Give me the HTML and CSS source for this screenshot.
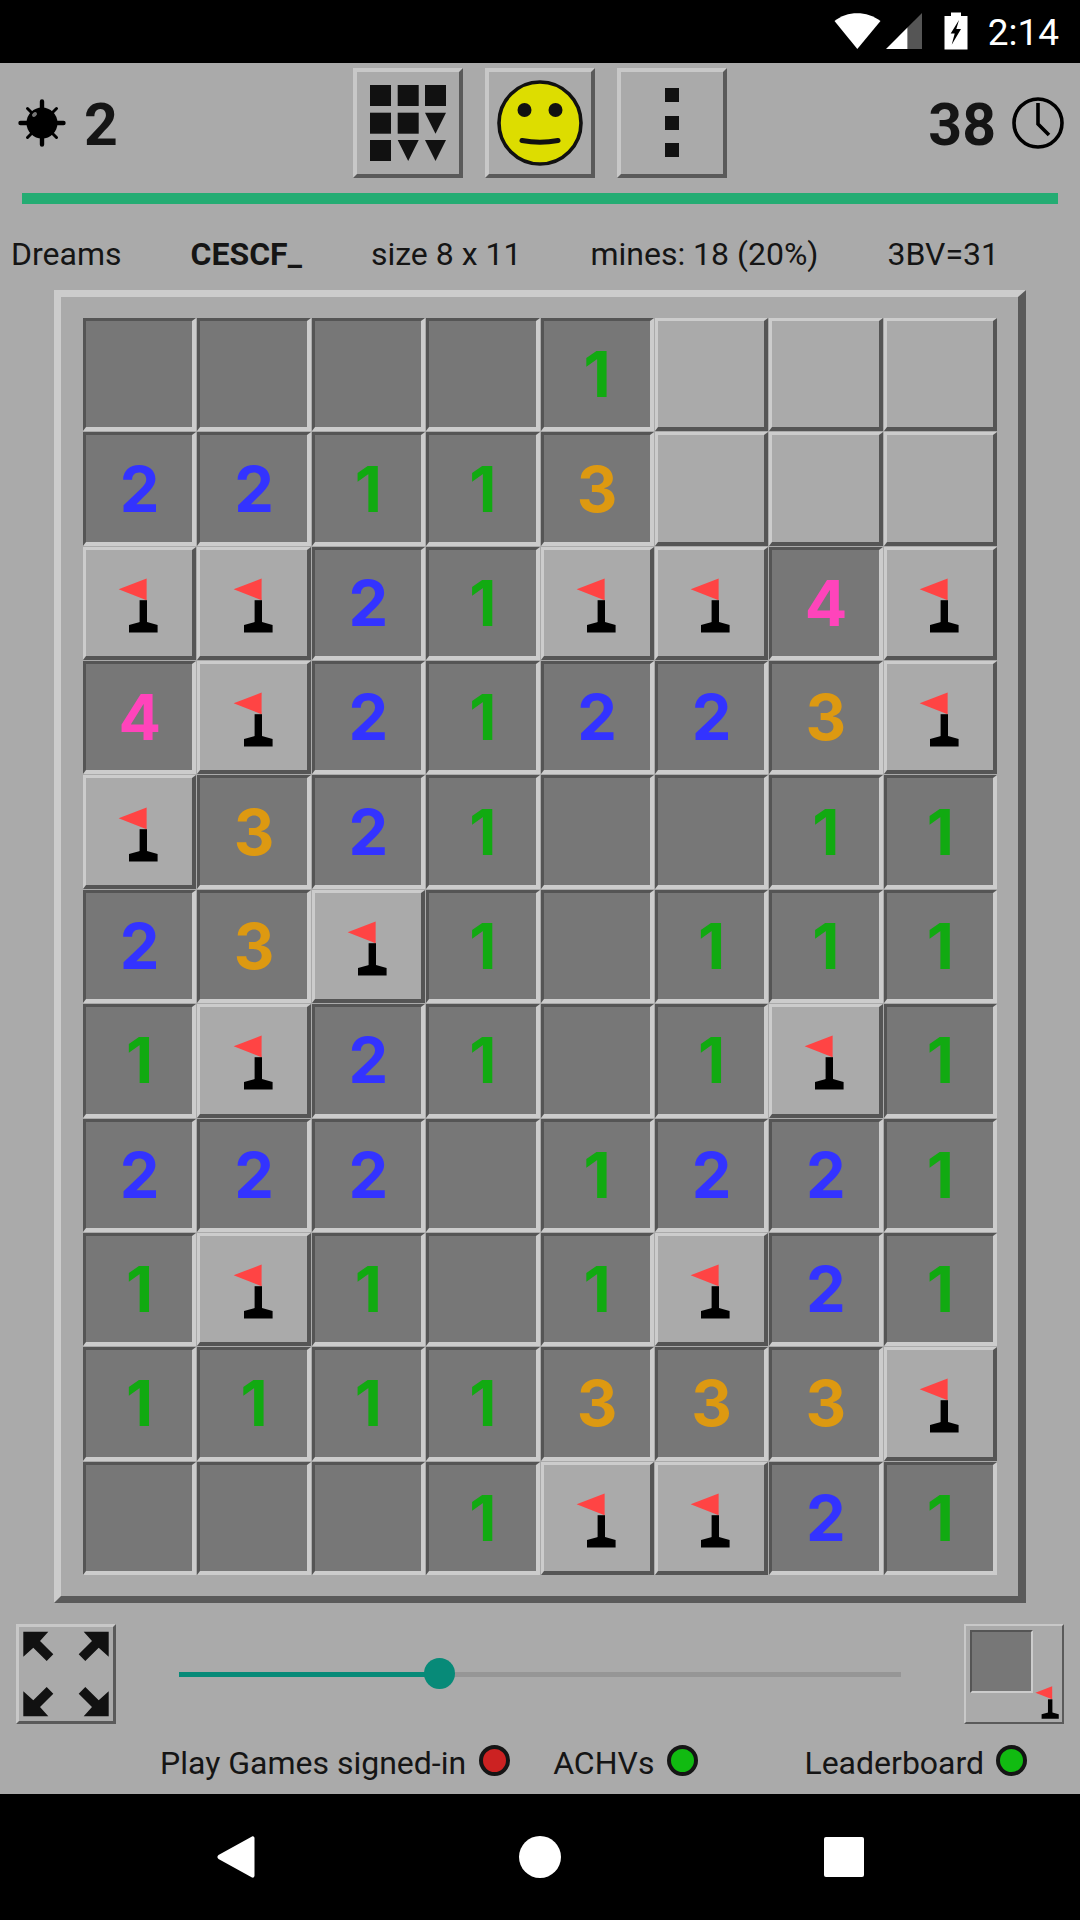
FILE: index.html
```html
<!DOCTYPE html>
<html lang="en">
<head>
  <meta charset="UTF-8" />
  <title>Minesweeper</title>
  <link rel="stylesheet" href="styles.css">
</head>
<body>
  <svg class="defs" width="0" height="0">
    <symbol id="flag" viewBox="0 0 114 114">
      <polygon points="35.6,42.2 63.6,31.5 63.6,53.2" fill="#ff4444" />
      <rect x="56.6" y="53.2" width="7.4" height="23" fill="#000" />
      <path d="M46 85.5V78L57 75H64L74.6 78V85.5Z" fill="#000" />
    </symbol>
  </svg>

  <div class="status-bar">
    <svg class="wifi" width="47" height="36" viewBox="0 0 47 36"><path d="M0.5 8C13-2.5 33-2.5 46.5 8L23.3 36Z" fill="#fff" /></svg>
    <svg class="signal" width="36" height="36" viewBox="0 0 36 36">
      <polygon points="0,36 21.7,14.3 21.7,36" fill="#fff" />
      <polygon points="21.7,14.3 36,0 36,36 21.7,36" fill="#555" />
    </svg>
    <svg class="battery" width="24" height="38" viewBox="0 0 24 38">
      <path d="M7 0.5H17V4H23.5V37.5H0.5V4H7Z" fill="#fff" />
      <polygon points="15,8 6.7,21.5 10.7,21.5 7.7,32.8 17,17 12.3,17" fill="#000" />
    </svg>
    <span class="clock-text">2:14</span>
  </div>

  <div class="top-bar">
    <div class="counter">
      <svg width="48" height="48" viewBox="-24 -24 48 48">
        <g stroke="#000" stroke-linecap="round">
          <path d="M0-21.5V21.5M-21.5 0H21.5" stroke-width="4.4" />
          <path d="M-14.5-14.5L14.5 14.5M-14.5 14.5L14.5-14.5" stroke-width="3" />
        </g>
        <circle r="15.5" fill="#000" />
        <ellipse cx="-7.5" cy="-8.5" rx="2.8" ry="2" fill="#777" transform="rotate(-40 -7.5 -8.5)" />
      </svg>
      <span class="big-num">2</span>
    </div>

    <div class="tools">
      <div class="btn">
        <svg width="110" height="110" viewBox="0 0 110 110" fill="#111">
          <rect x="17" y="17" width="21" height="21" /><rect x="44.7" y="17" width="21" height="21" /><rect x="72" y="17" width="21" height="21" />
          <rect x="17" y="44.7" width="21" height="21" /><rect x="44.7" y="44.7" width="21" height="21" /><polygon points="72,44.7 93,44.7 82.5,65.7" />
          <rect x="17" y="72" width="21" height="21" /><polygon points="44.7,72 65.7,72 55.2,93" /><polygon points="72,72 93,72 82.5,93" />
        </svg>
      </div>
      <div class="btn">
        <svg width="110" height="110" viewBox="-55 -55 110 110">
          <circle r="41" fill="#dddd00" stroke="#111" stroke-width="3.6" />
          <circle cx="-15.5" cy="-13" r="7" fill="#111" />
          <circle cx="15.5" cy="-13" r="7" fill="#111" />
          <path d="M-18 17.5Q0 21 18 17.5" fill="none" stroke="#111" stroke-width="5" stroke-linecap="round" />
        </svg>
      </div>
      <div class="btn">
        <svg width="110" height="110" viewBox="0 0 110 110" fill="#111">
          <rect x="48" y="20" width="14" height="14" />
          <rect x="48" y="48" width="14" height="14" />
          <rect x="48" y="75" width="14" height="14" />
        </svg>
      </div>
    </div>

    <div class="counter timer">
      <span class="big-num">38</span>
      <svg width="52" height="52" viewBox="-26 -26 52 52">
        <circle r="24" fill="none" stroke="#000" stroke-width="3.6" />
        <path d="M0-20V1L11 12" fill="none" stroke="#000" stroke-width="3.6" />
      </svg>
    </div>
  </div>

  <div class="progress"></div>

  <div class="info-row">
    <span>Dreams</span>
    <b>CESCF_</b>
    <span>size 8 x 11</span>
    <span>mines: 18 (20%)</span>
    <span>3BV=31</span>
  </div>

  <div class="frame">
    <div class="board">
      <div class="cell open"></div>
      <div class="cell open"></div>
      <div class="cell open"></div>
      <div class="cell open"></div>
      <div class="cell open n1">1</div>
      <div class="cell"></div>
      <div class="cell"></div>
      <div class="cell"></div>

      <div class="cell open n2">2</div>
      <div class="cell open n2">2</div>
      <div class="cell open n1">1</div>
      <div class="cell open n1">1</div>
      <div class="cell open n3">3</div>
      <div class="cell"></div>
      <div class="cell"></div>
      <div class="cell"></div>

      <div class="cell"><svg class="flag"><use href="#flag" /></svg></div>
      <div class="cell"><svg class="flag"><use href="#flag" /></svg></div>
      <div class="cell open n2">2</div>
      <div class="cell open n1">1</div>
      <div class="cell"><svg class="flag"><use href="#flag" /></svg></div>
      <div class="cell"><svg class="flag"><use href="#flag" /></svg></div>
      <div class="cell open n4">4</div>
      <div class="cell"><svg class="flag"><use href="#flag" /></svg></div>

      <div class="cell open n4">4</div>
      <div class="cell"><svg class="flag"><use href="#flag" /></svg></div>
      <div class="cell open n2">2</div>
      <div class="cell open n1">1</div>
      <div class="cell open n2">2</div>
      <div class="cell open n2">2</div>
      <div class="cell open n3">3</div>
      <div class="cell"><svg class="flag"><use href="#flag" /></svg></div>

      <div class="cell"><svg class="flag"><use href="#flag" /></svg></div>
      <div class="cell open n3">3</div>
      <div class="cell open n2">2</div>
      <div class="cell open n1">1</div>
      <div class="cell open"></div>
      <div class="cell open"></div>
      <div class="cell open n1">1</div>
      <div class="cell open n1">1</div>

      <div class="cell open n2">2</div>
      <div class="cell open n3">3</div>
      <div class="cell"><svg class="flag"><use href="#flag" /></svg></div>
      <div class="cell open n1">1</div>
      <div class="cell open"></div>
      <div class="cell open n1">1</div>
      <div class="cell open n1">1</div>
      <div class="cell open n1">1</div>

      <div class="cell open n1">1</div>
      <div class="cell"><svg class="flag"><use href="#flag" /></svg></div>
      <div class="cell open n2">2</div>
      <div class="cell open n1">1</div>
      <div class="cell open"></div>
      <div class="cell open n1">1</div>
      <div class="cell"><svg class="flag"><use href="#flag" /></svg></div>
      <div class="cell open n1">1</div>

      <div class="cell open n2">2</div>
      <div class="cell open n2">2</div>
      <div class="cell open n2">2</div>
      <div class="cell open"></div>
      <div class="cell open n1">1</div>
      <div class="cell open n2">2</div>
      <div class="cell open n2">2</div>
      <div class="cell open n1">1</div>

      <div class="cell open n1">1</div>
      <div class="cell"><svg class="flag"><use href="#flag" /></svg></div>
      <div class="cell open n1">1</div>
      <div class="cell open"></div>
      <div class="cell open n1">1</div>
      <div class="cell"><svg class="flag"><use href="#flag" /></svg></div>
      <div class="cell open n2">2</div>
      <div class="cell open n1">1</div>

      <div class="cell open n1">1</div>
      <div class="cell open n1">1</div>
      <div class="cell open n1">1</div>
      <div class="cell open n1">1</div>
      <div class="cell open n3">3</div>
      <div class="cell open n3">3</div>
      <div class="cell open n3">3</div>
      <div class="cell"><svg class="flag"><use href="#flag" /></svg></div>

      <div class="cell open"></div>
      <div class="cell open"></div>
      <div class="cell open"></div>
      <div class="cell open n1">1</div>
      <div class="cell"><svg class="flag"><use href="#flag" /></svg></div>
      <div class="cell"><svg class="flag"><use href="#flag" /></svg></div>
      <div class="cell open n2">2</div>
      <div class="cell open n1">1</div>
    </div>
  </div>

  <div class="zoom-row">
    <div class="btn btn-small">
      <svg width="94" height="94" viewBox="3 3 94 94" fill="#111">
        <g id="arrow"><polygon points="7.3,7.7 32.3,7.7 24,17 37.3,30.3 30.7,37 17.3,23.7 7.3,32.7" /></g>
        <use href="#arrow" transform="matrix(-1 0 0 1 100 0)" />
        <use href="#arrow" transform="matrix(1 0 0 -1 0 100)" />
        <use href="#arrow" transform="matrix(-1 0 0 -1 100 100)" />
      </svg>
    </div>

    <div class="slider">
      <div class="slider-fill"></div>
      <div class="slider-rest"></div>
      <div class="slider-thumb"></div>
    </div>

    <div class="btn btn-small btn-mode">
      <div class="mini-cell"></div>
      <svg class="mini-flag" viewBox="35 31 40 55"><use href="#flag" width="114" height="114" /></svg>
    </div>
  </div>

  <div class="games-row">
    <span class="game-item">Play Games signed-in <i class="dot red"></i></span>
    <span class="game-item achvs">ACHVs <i class="dot green"></i></span>
    <span class="game-item board-link">Leaderboard <i class="dot green"></i></span>
  </div>

  <div class="nav-bar">
    <svg width="38" height="42" viewBox="0 0 38 42"><path d="M35 0.5C36.5 0 37.5 1 37.5 2.5V39.5C37.5 41 36.5 42 35 41.5L1.5 23C0 22 0 20 1.5 19Z" fill="#fff" /></svg>
    <div class="nav-circle"></div>
    <div class="nav-square"></div>
  </div>
</body>
</html>
```

FILE: styles.css
```css
* { box-sizing: border-box; }

body {
  margin: 0;
  width: 1080px;
  height: 1920px;
  overflow: hidden;
  background: #aaa;
  color: #151515;
  font-family: Roboto, sans-serif;
  font-size: 32px;
}

.defs { position: absolute; }

/* status bar */
.status-bar {
  height: 63px;
  background: #000;
  color: #fff;
  display: flex;
  align-items: flex-start;
  padding: 12px 21px 0 0;
  justify-content: flex-end;
}

.wifi { margin-top: 1px; }
.signal { margin: 1px 0 0 5px; }
.battery { margin-left: 22px; }

.clock-text {
  margin-left: 20px;
  font-size: 37px;
  line-height: 41px;
}

/* top bar */
.top-bar {
  margin-top: 5px;
  height: 110px;
  display: grid;
  grid-template-columns: 1fr auto 1fr;
  align-items: center;
}

.counter {
  display: flex;
  align-items: center;
  padding-left: 18px;
  gap: 18px;
}

.timer {
  justify-content: flex-end;
  padding: 0 16px 0 0;
  gap: 16px;
}

.big-num {
  padding-top: 4px;
  font-size: 59px;
  font-weight: 700;
  line-height: 68px;
}

.tools { display: flex; gap: 22px; }

.btn {
  width: 110px;
  height: 110px;
  border: 4px solid;
  border-color: #c8c8c8 #5a5a5a #5a5a5a #c8c8c8;
  display: flex;
  align-items: center;
  justify-content: center;
  flex: none;
  overflow: hidden;
}

.btn svg { flex: none; }

.progress {
  margin: 15px 22px 0;
  height: 11px;
  background: #24ac73;
}

.info-row {
  margin-top: 32px;
  padding: 0 81px 0 11px;
  display: flex;
  justify-content: space-between;
  line-height: 36px;
  white-space: nowrap;
}

/* board */
.frame {
  margin: 18px 0 0 54px;
  width: 972px;
  height: 1313px;
  border: 7px solid;
  border-color: #ccc #5a5a5a #5a5a5a #ccc;
  border-right-width: 8px;
  padding: 21px 21px 21px 22px;
}

.board {
  width: 914px;
  height: 1257px;
  display: grid;
  grid-template-columns: repeat(8, minmax(0, 1fr));
  grid-template-rows: repeat(11, minmax(0, 1fr));
  gap: 1px;
}

.cell {
  min-width: 0;
  min-height: 0;
  border: solid;
  border-width: 3px 4px 4px 3px;
  border-color: #ccc #555 #555 #ccc;
  padding: 1px 0 0 1px;
  background: #aaa;
  display: flex;
  align-items: center;
  justify-content: center;
  font-family: Inter, sans-serif;
  font-size: 63px;
  font-weight: 700;
  line-height: 1;
}

.cell.open {
  border-color: #555 #ccc #ccc #555;
  background: #777;
}

.flag {
  flex: none;
  width: 114px;
  height: 114px;
  margin: 1px 0 0 1px;
  display: block;
}

.n1 { color: #11aa11; }
.n2 { color: #3333ff; }
.n3 { color: #dd9911; }
.n4 { color: #ff44bb; }

/* zoom slider row */
.zoom-row {
  margin-top: 21px;
  height: 100px;
  padding: 0 16px;
  display: flex;
  align-items: center;
}

.btn-small {
  width: 100px;
  height: 100px;
  border-width: 3px;
}

.slider {
  position: relative;
  margin-left: 63px;
  width: 722px;
  height: 5px;
  display: flex;
}

.slider-fill { width: 260px; background: #078a78; }
.slider-rest { flex: 1; background: #969696; }

.slider-thumb {
  position: absolute;
  left: 245px;
  top: -14px;
  width: 31px;
  height: 31px;
  border-radius: 50%;
  background: #078a78;
}

.btn-mode {
  position: relative;
  margin-left: auto;
  border-width: 2px;
  align-items: flex-start;
  justify-content: flex-start;
  padding: 4px 0 0 4px;
}

.mini-cell {
  width: 63px;
  height: 63px;
  background: #777;
  border: 2px solid;
  border-color: #555 #ccc #ccc #555;
}

.mini-flag {
  position: absolute;
  left: 69px;
  top: 60px;
  width: 24px;
  height: 33px;
}

/* play games row */
.games-row {
  height: 70px;
  padding: 21px 0 0 160px;
  display: flex;
  line-height: 36px;
  white-space: nowrap;
}

.game-item {
  display: flex;
  align-items: flex-start;
  gap: 13px;
}

.achvs { margin-left: 43px; }
.board-link { margin-left: 106px; gap: 12px; }

.dot {
  width: 31px;
  height: 31px;
  border-radius: 50%;
  border: 4px solid #151515;
}

.red { background: #cc2222; }
.green { background: #11bb11; }

/* nav bar */
.nav-bar {
  height: 126px;
  background: #000;
  padding: 0 216px 0 217px;
  display: flex;
  align-items: center;
  justify-content: space-between;
}

.nav-circle {
  width: 42px;
  height: 42px;
  border-radius: 50%;
  background: #fff;
}

.nav-square {
  width: 40px;
  height: 40px;
  border-radius: 2px;
  background: #fff;
}
```
